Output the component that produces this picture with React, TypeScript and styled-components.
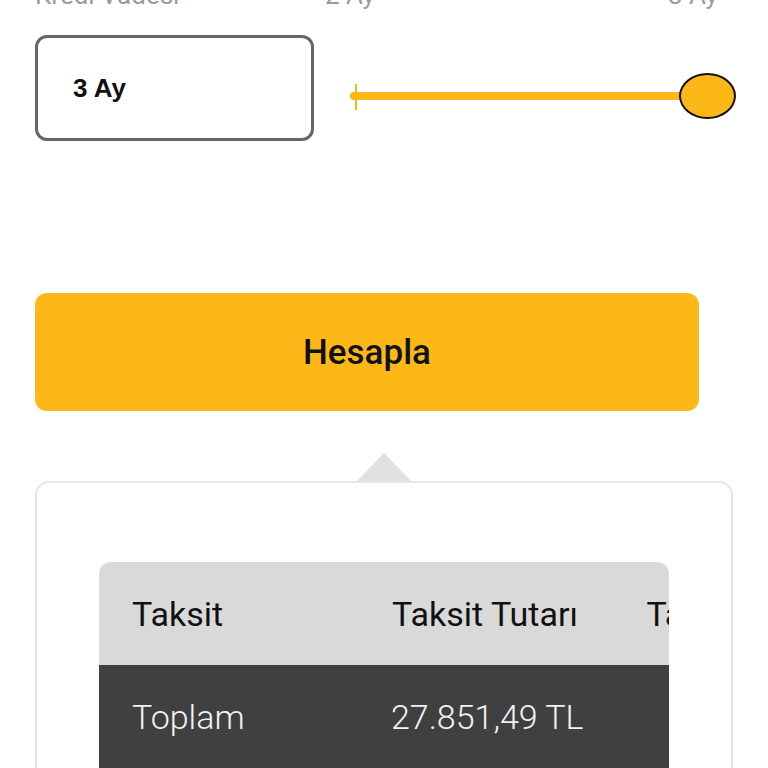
import React from "react";
import styled, { createGlobalStyle } from "styled-components";

const Global = createGlobalStyle`
  html, body { margin: 0; padding: 0; background: #ffffff; }
  body { font-family: Roboto, "Noto Sans", sans-serif; overflow: hidden; }
  * { box-sizing: border-box; }
`;

const Page = styled.div`
  width: 768px;
  height: 768px;
  overflow: hidden;
  padding: 0 35px;
`;

const LabelRow = styled.div`
  display: flex;
  align-items: baseline;
  margin-top: -20px;
  height: 30px;
`;

const Label = styled.span<{ $w?: number }>`
  font-size: 26px;
  line-height: 30px;
  color: #9b9b9b;
  flex: 0 0 ${(p) => (p.$w ? `${p.$w}px` : "auto")};
  white-space: nowrap;
`;

const Row = styled.div`
  display: flex;
  align-items: flex-start;
  margin-top: 25px;
`;

const InputBox = styled.div`
  flex: 0 0 279px;
  height: 106px;
  border: 3px solid #666666;
  border-radius: 12px;
  display: flex;
  align-items: center;
  padding-left: 35px;
  font-family: "Liberation Sans", Arial, sans-serif;
  font-weight: 700;
  font-size: 26px;
  color: #111111;
`;

const Slider = styled.div`
  position: relative;
  flex: 0 0 386px;
  height: 46px;
  margin-left: 36px;
  margin-top: 38px;
  display: flex;
  align-items: center;
`;

const Track = styled.div`
  width: 345px;
  height: 8px;
  border-radius: 4px 0 0 4px;
  background: #fbb817;
`;

const Tick = styled.div`
  position: absolute;
  left: 5px;
  top: 11px;
  width: 2px;
  height: 26px;
  background: #fbb817;
`;

const Thumb = styled.div`
  position: absolute;
  right: 0;
  top: 0;
  width: 57px;
  height: 46px;
  border-radius: 50%;
  background: #fbb817;
  border: 2.5px solid #111111;
`;

const Button = styled.button`
  display: flex;
  align-items: center;
  justify-content: center;
  width: 664px;
  height: 118px;
  margin-top: 152px;
  border: none;
  border-radius: 12px;
  background: #fbb817;
  font-family: Roboto, sans-serif;
  font-weight: 500;
  font-size: 35px;
  color: #111111;
  padding: 0;
`;

const Card = styled.div`
  position: relative;
  margin-top: 70px;
  width: 698px;
  height: 320px;
  border: 2px solid #e6e6e6;
  border-radius: 14px;
  padding: 79px 0 0 62px;
`;

const Arrow = styled.div`
  position: absolute;
  top: -30px;
  left: 320px;
  width: 0;
  height: 0;
  border-left: 27px solid transparent;
  border-right: 27px solid transparent;
  border-bottom: 28px solid #e0e0e0;
`;

const TableWrap = styled.div`
  width: 570px;
  overflow: hidden;
  border-radius: 12px 12px 0 0;
`;

const TRow = styled.div<{ $dark?: boolean }>`
  display: flex;
  height: 103px;
  width: max-content;
  background: ${(p) => (p.$dark ? "#404040" : "#d9d9d9")};
  color: ${(p) => (p.$dark ? "#f2f2f2" : "#111111")};
  font-weight: ${(p) => (p.$dark ? 300 : 400)};
`;

const Cell = styled.div<{ $w: number; $center?: boolean }>`
  flex: 0 0 ${(p) => p.$w}px;
  display: flex;
  align-items: center;
  justify-content: ${(p) => (p.$center ? "center" : "flex-start")};
  padding: 0 33px;
  font-size: 34px;
  white-space: nowrap;
`;

const cols = [
  { w: 259, center: false },
  { w: 254, center: true },
  { w: 325, center: true },
];

const header = ["Taksit", "Taksit Tutarı", "Taksit Faiz Tutarı"];
const total = ["Toplam", "27.851,49 TL", "12.351,49 TL"];

export default function App() {
  return (
    <Page>
      <Global />
      <LabelRow>
        <Label $w={290}>Kredi Vadesi</Label>
        <Label $w={343}>2 Ay</Label>
        <Label>3 Ay</Label>
      </LabelRow>
      <Row>
        <InputBox>3 Ay</InputBox>
        <Slider>
          <Track />
          <Tick />
          <Thumb />
        </Slider>
      </Row>
      <Button>Hesapla</Button>
      <Card>
        <Arrow />
        <TableWrap>
          <TRow>
            {header.map((h, i) => (
              <Cell key={h} $w={cols[i].w} $center={cols[i].center}>
                {h}
              </Cell>
            ))}
          </TRow>
          <TRow $dark>
            {total.map((t, i) => (
              <Cell key={t} $w={cols[i].w} $center={cols[i].center}>
                {t}
              </Cell>
            ))}
          </TRow>
        </TableWrap>
      </Card>
    </Page>
  );
}
